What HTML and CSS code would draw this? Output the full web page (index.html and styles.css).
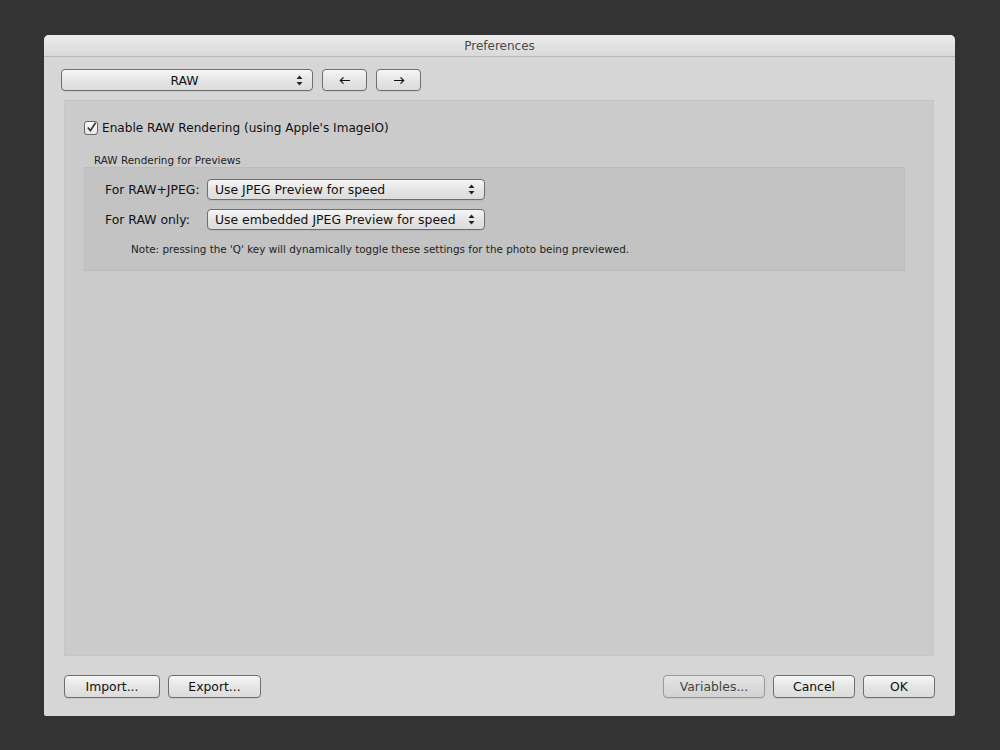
FILE: index.html
```html
<!DOCTYPE html>
<html>
<head>
<meta charset="utf-8">
<link rel="stylesheet" href="styles.css">
</head>
<body>
<div class="window">
  <div class="titlebar">Preferences</div>
  <div class="toolbar">
    <div class="btn popup top-popup"><span class="popup-label center">RAW</span><span class="arrows"><svg width="7" height="11" viewBox="0 0 7 11"><path d="M3.5 0.5 L6.5 4 L0.5 4 Z M3.5 10.5 L6.5 7 L0.5 7 Z" fill="#222"/></svg></span></div>
    <div class="btn nav"><svg width="12" height="9" viewBox="0 0 12 9"><path d="M11 4.5 H1.5 M4.5 1.3 L1.3 4.5 L4.5 7.7" stroke="#111" stroke-width="1.2" fill="none"/></svg></div>
    <div class="btn nav"><svg width="12" height="9" viewBox="0 0 12 9"><path d="M1 4.5 H10.5 M7.5 1.3 L10.7 4.5 L7.5 7.7" stroke="#111" stroke-width="1.2" fill="none"/></svg></div>
  </div>
  <div class="panel">
    <div class="check-row">
      <span class="checkbox"><svg width="11" height="11" viewBox="0 0 11 11"><path d="M1.8 5.6 L4.4 8.6 L9.6 0.8" stroke="#333" stroke-width="1.6" fill="none"/></svg></span>
      <span class="check-label">Enable RAW Rendering (using Apple's ImageIO)</span>
    </div>
    <div class="group-title">RAW Rendering for Previews</div>
    <div class="group">
      <div class="form-row">
        <span class="row-label">For RAW+JPEG:</span>
        <div class="btn popup row-popup"><span class="popup-label">Use JPEG Preview for speed</span><span class="arrows"><svg width="7" height="11" viewBox="0 0 7 11"><path d="M3.5 0.5 L6.5 4 L0.5 4 Z M3.5 10.5 L6.5 7 L0.5 7 Z" fill="#222"/></svg></span></div>
      </div>
      <div class="form-row">
        <span class="row-label">For RAW only:</span>
        <div class="btn popup row-popup"><span class="popup-label">Use embedded JPEG Preview for speed</span><span class="arrows"><svg width="7" height="11" viewBox="0 0 7 11"><path d="M3.5 0.5 L6.5 4 L0.5 4 Z M3.5 10.5 L6.5 7 L0.5 7 Z" fill="#222"/></svg></span></div>
      </div>
      <div class="note">Note: pressing the 'Q' key will dynamically toggle these settings for the photo being previewed.</div>
    </div>
  </div>
  <div class="footer">
    <div class="btn push w-import">Import...</div>
    <div class="btn push w-export">Export...</div>
    <div class="spacer"></div>
    <div class="btn push disabled w-variables">Variables...</div>
    <div class="btn push w-cancel">Cancel</div>
    <div class="btn push w-ok">OK</div>
  </div>
</div>
</body>
</html>
```

FILE: styles.css
```css
html, body {
  margin: 0;
  padding: 0;
}
body {
  background: #333333;
  width: 1000px;
  height: 750px;
  overflow: hidden;
  font-family: "DejaVu Sans", "Liberation Sans", sans-serif;
  color: #111;
}
.window {
  margin: 35px 0 0 44px;
  width: 911px;
  height: 681px;
  background: #d6d6d6;
  border-radius: 5px 5px 2px 2px;
  display: flex;
  flex-direction: column;
  box-sizing: border-box;
}
.titlebar {
  height: 21px;
  border-bottom: 1px solid #b8b8b8;
  background: linear-gradient(#ececec, #d9d9d9);
  border-radius: 5px 5px 0 0;
  text-align: center;
  font-size: 12px;
  line-height: 23px;
  color: #4a4a4a;
}
.toolbar {
  display: flex;
  gap: 9px;
  padding: 12px 0 0 17px;
}
.btn {
  box-sizing: border-box;
  height: 22px;
  border: 1px solid #6e6e6e;
  border-radius: 4px;
  background: linear-gradient(#f6f6f6, #e4e4e4 55%, #dcdcdc);
  box-shadow: 0 1px 0 rgba(0,0,0,0.06);
  display: flex;
  align-items: center;
  justify-content: center;
  font-size: 12.4px;
  color: #111;
}
.popup {
  justify-content: flex-start;
  padding: 0 9px 0 7px;
}
.popup-label {
  flex: 1;
  white-space: nowrap;
}
.popup-label.center {
  text-align: center;
  padding-left: 4px;
}
.arrows {
  display: flex;
  align-items: center;
}
.top-popup {
  width: 252px;
}
.nav {
  width: 45px;
}
.panel {
  margin: 9px 21px 0 20px;
  height: 556px;
  box-sizing: border-box;
  background: #cbcbcb;
  border: 1px solid #c6c6c6;
  border-top-color: #c2c2c2;
  padding: 19px 28px 0 19px;
}
.check-row {
  display: flex;
  align-items: center;
  gap: 4px;
  height: 15px;
}
.checkbox {
  width: 14px;
  height: 14px;
  box-sizing: border-box;
  border: 1px solid #666;
  border-radius: 3px;
  background: linear-gradient(#fbfbfb, #e6e6e6);
  display: flex;
  align-items: center;
  justify-content: center;
}
.check-label {
  font-size: 12.1px;
  color: #111;
}
.group-title {
  font-size: 10.4px;
  color: #222;
  margin: 18px 0 0 10px;
  height: 14px;
  line-height: 14px;
}
.group {
  margin-top: 0;
  height: 104px;
  box-sizing: border-box;
  background: #c3c3c3;
  border: 1px solid #bdbdbd;
  padding: 11px 0 0 20px;
  display: flex;
  flex-direction: column;
  gap: 9px;
}
.form-row {
  display: flex;
  align-items: center;
  height: 21px;
}
.row-label {
  width: 102px;
  font-size: 12.4px;
  color: #111;
}
.row-popup {
  width: 278px;
  height: 21px;
  padding-left: 7px;
}
.note {
  font-size: 10.4px;
  color: #222;
  margin: 4px 0 0 26px;
}
.footer {
  display: flex;
  gap: 8px;
  padding: 19px 20px 0 20px;
}
.spacer {
  flex: 1;
}
.push {
  height: 23px;
}
.disabled {
  border-color: #9a9a9a;
  background: linear-gradient(#e4e4e4, #d2d2d2);
  color: #444;
}
.w-import { width: 96px; }
.w-export { width: 93px; }
.w-variables { width: 102px; }
.w-cancel { width: 82px; }
.w-ok { width: 72px; }
```
